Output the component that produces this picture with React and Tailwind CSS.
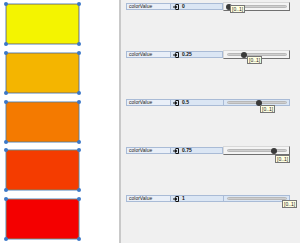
import React from 'react'

const rows = [
  { value: 0, label: '0', fill: '#f4f400', tip: [230, 2] },
  { value: 0.25, label: '0.25', fill: '#f4b500', tip: [247, 5] },
  { value: 0.5, label: '0.5', fill: '#f47a00', tip: [260, 5] },
  { value: 0.75, label: '0.75', fill: '#f43c00', tip: [275, 6] },
  { value: 1, label: '1', fill: '#f40000', tip: [282, 3] },
]

const Handle = ({ pos }) => (
  <span className={`absolute w-[4px] h-[4px] rounded-full bg-[#3b78c8] ${pos}`}></span>
)

const ColorBox = ({ fill }) => (
  <div className="relative ml-[5px] w-[75px] h-[42px] border border-[#a9c2de]">
    <div className="w-full h-full border border-[#8a7a5a]/60" style={{ backgroundColor: fill }}></div>
    <Handle pos="-left-[2px] -top-[2px]" />
    <Handle pos="-right-[2px] -top-[2px]" />
    <Handle pos="-left-[2px] -bottom-[2px]" />
    <Handle pos="-right-[2px] -bottom-[2px]" />
  </div>
)

const PortIcon = () => (
  <svg width="6" height="6" viewBox="0 0 6 6" className="shrink-0">
    <path d="M2.5 0.5 H5.5 V5.5 H2.5" fill="none" stroke="#111" strokeWidth="1" />
    <path d="M0 3 H3.5 M2 1.5 L3.5 3 L2 4.5" fill="none" stroke="#111" strokeWidth="1.2" />
  </svg>
)

const ParamRow = ({ row, raised }) => (
  <div className="relative flex items-center h-[7px] ml-[5px] w-[164px]">
    <div className="flex items-center h-[7px] w-[98px] bg-[#dbe6f4] border border-[#a9bbd6]">
      <div className="h-full w-[44px] bg-[#e9eff8] border-r border-[#a9bbd6] pl-[2px] text-[5px] leading-[5px] text-[#222]">
        colorValue
      </div>
      <div className="ml-[2px]"><PortIcon /></div>
      <span className="ml-[3px] text-[5px] leading-[5px] font-bold text-[#111]">{row.label}</span>
    </div>
    <div
      className={
        raised
          ? 'relative flex items-center h-[9px] w-[67px] bg-[#f4f4f4] border border-[#d8d8d8] border-r-[#707070] border-b-[#707070]'
          : 'relative flex items-center h-[7px] w-[66px] bg-[#dbe6f4] border-y border-r border-[#a9bbd6]'
      }
    >
      <div className="relative ml-[3px] w-[60px] h-[3px] rounded-full bg-[#cfcfcf] border border-[#b8b8b8]">
        {row.value < 1 && (
          <span
            className="absolute top-1/2 -translate-y-1/2 -translate-x-1/2 w-[6px] h-[6px] rounded-full bg-[#3a3a3a]"
            style={{ left: `${row.value * 59 + 1}px` }}
          ></span>
        )}
      </div>
    </div>
  </div>
)

export default function App() {
  return (
    <div className="flex w-[300px] h-[243px] overflow-hidden bg-[#f0f0f0]" style={{ fontFamily: '"Liberation Sans", Arial, sans-serif' }}>
      <div className="w-[119px] h-full bg-white flex flex-col pt-[3px] gap-[6.75px]">
        {rows.map((r) => (
          <ColorBox key={r.label} fill={r.fill} />
        ))}
      </div>
      <div className="w-[2px] h-full bg-[#c9c9c9]"></div>
      <div className="relative flex-1 h-full flex flex-col pt-[3px]">
        {rows.map((r, i) => (
          <div key={r.label} className="h-[48.75px]">
            <ParamRow row={r} raised={i === 0 || i === 1 || i === 3} />
          </div>
        ))}
        {rows.map((r, i) => (
          <div
            key={'tip' + r.label}
            className="absolute h-[8px] px-[1px] bg-[#ffffe1] border border-[#767676] text-[5px] leading-[6px] text-[#222]"
            style={{ left: `${r.tip[0] - 121}px`, top: `${[3, 51, 100, 149, 197][i] + r.tip[1]}px` }}
          >
            [0..1]
          </div>
        ))}
      </div>
    </div>
  )
}
